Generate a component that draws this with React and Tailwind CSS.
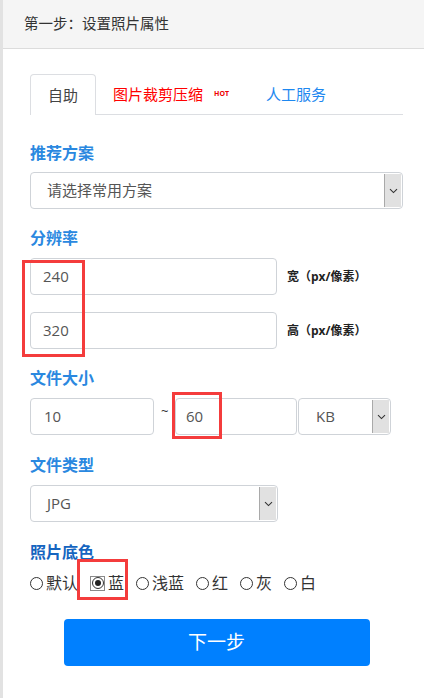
const FONT = { fontFamily: '"Open Sans", "Noto Sans CJK SC", sans-serif' };

function Arrow() {
  return (
    <div className="flex h-full w-[17px] items-center justify-center border-l border-[#a9a9a9] bg-[#e1e1e1]">
      <svg width="9" height="6" viewBox="0 0 9 6" fill="none">
        <path d="M1 1.2 L4.5 4.6 L8 1.2" stroke="#333" strokeWidth="1.1" />
      </svg>
    </div>
  );
}

function FakeSelect({ value, width, pad = "pl-[16px]" }) {
  return (
    <div className={`flex h-[37px] items-center justify-between rounded-[4px] border border-[#cfd3d8] bg-white ${width}`}>
      <span className={`${pad} text-[15px] text-[#555]`}>{value}</span>
      <div className="h-full py-[1px] pr-[1px]">
        <Arrow />
      </div>
    </div>
  );
}

function Label({ children, className = "" }) {
  return (
    <div className={`h-[20px] text-[16px] font-bold leading-[20px] text-[#2a88e0] ${className}`}>{children}</div>
  );
}

const colors = ["默认", "蓝", "浅蓝", "红", "灰", "白"];

export default function App() {
  return (
    <div className="relative h-[698px] w-[424px] border-l-[3px] border-[#e2e2e2] bg-white" style={FONT}>
      <div className="flex h-[49px] items-center border-b border-[#dcdcdc] bg-[#f5f5f5] pl-[21px] text-[14.5px] text-[#333]">
        第一步：设置照片属性
      </div>

      <div className="pl-[27px] pr-[21px] pt-[25px]">
        <div className="flex h-[41px] items-stretch">
          <div className="flex items-center rounded-t-[4px] border border-b-0 border-[#dcdee2] px-[17px] text-[15px] text-[#444]">
            自助
          </div>
          <div className="flex flex-1 items-center border-b border-[#dcdee2] text-[15px]">
            <span className="ml-[17px] text-[#f00]">图片裁剪压缩</span>
            <span className="ml-[11px] text-[7px] font-bold text-[#e00]">HOT</span>
            <span className="ml-[37px] text-[#1e88f0]">人工服务</span>
          </div>
        </div>

        <Label className="mt-[28px]">推荐方案</Label>
        <div className="mt-[9px]">
          <FakeSelect value="请选择常用方案" width="w-[373px]" />
        </div>

        <Label className="mt-[19px]">分辨率</Label>
        <div className="mt-[10px] flex items-center">
          <div className="flex h-[37px] w-[247px] items-center rounded-[4px] border border-[#cfd3d8] pl-[12px] text-[15px] text-[#555]">
            240
          </div>
          <span className="ml-[10px] text-[12px] font-bold text-[#222]">宽（px/像素）</span>
        </div>
        <div className="mt-[17px] flex items-center">
          <div className="flex h-[37px] w-[247px] items-center rounded-[4px] border border-[#cfd3d8] pl-[12px] text-[15px] text-[#555]">
            320
          </div>
          <span className="ml-[10px] text-[12px] font-bold text-[#222]">高（px/像素）</span>
        </div>

        <Label className="mt-[19px]">文件大小</Label>
        <div className="mt-[10px] flex items-center">
          <div className="flex h-[37px] w-[124px] items-center rounded-[4px] border border-[#cfd3d8] pl-[13px] text-[15px] text-[#555]">
            10
          </div>
          <span className="ml-[7px] mb-[10px] w-[14px] text-[13px] text-[#333]">~</span>
          <div className="flex h-[37px] w-[122px] items-center rounded-[4px] border border-[#cfd3d8] pl-[10px] text-[15px] text-[#555]">
            60
          </div>
          <div className="ml-[1px]">
            <FakeSelect value="KB" width="w-[93px]" pad="pl-[17px]" />
          </div>
        </div>

        <Label className="mt-[20px]">文件类型</Label>
        <div className="mt-[10px]">
          <FakeSelect value="JPG" width="w-[248px]" />
        </div>

        <Label className="mt-[20px] text-[#1565c0]">照片底色</Label>
        <div className="mt-[11px] flex h-[20px] items-center text-[16px] text-[#333]">
          {colors.map((c, i) => (
            <div key={c} className={`flex items-center ${i === 0 ? "" : "ml-[12px]"}`}>
              {i === 1 ? (
                <div className="flex h-[15px] w-[15px] items-center justify-center border border-[#8a8a8a]">
                  <div className="flex h-[12px] w-[12px] items-center justify-center rounded-full border border-[#333]">
                    <div className="h-[6px] w-[6px] rounded-full bg-[#222]" />
                  </div>
                </div>
              ) : (
                <div className="h-[13px] w-[13px] rounded-full border border-[#333]" />
              )}
              <span className={i === 1 ? "ml-[3px]" : "ml-[3px]"}>{c}</span>
            </div>
          ))}
        </div>

        <div className="mt-[26px] flex justify-center">
          <div className="flex h-[47px] w-[306px] items-center justify-center rounded-[4px] bg-[#0080ff] text-[19px] text-white">
            下一步
          </div>
        </div>
      </div>

      <div className="absolute left-[19px] top-[260px] h-[97px] w-[63px] border-[3px] border-[#f43c3c]" />
      <div className="absolute left-[169px] top-[392px] h-[47px] w-[50px] border-[3px] border-[#f43c3c]" />
      <div className="absolute left-[74px] top-[559px] h-[41px] w-[51px] border-[3px] border-[#f43c3c]" />
    </div>
  );
}
